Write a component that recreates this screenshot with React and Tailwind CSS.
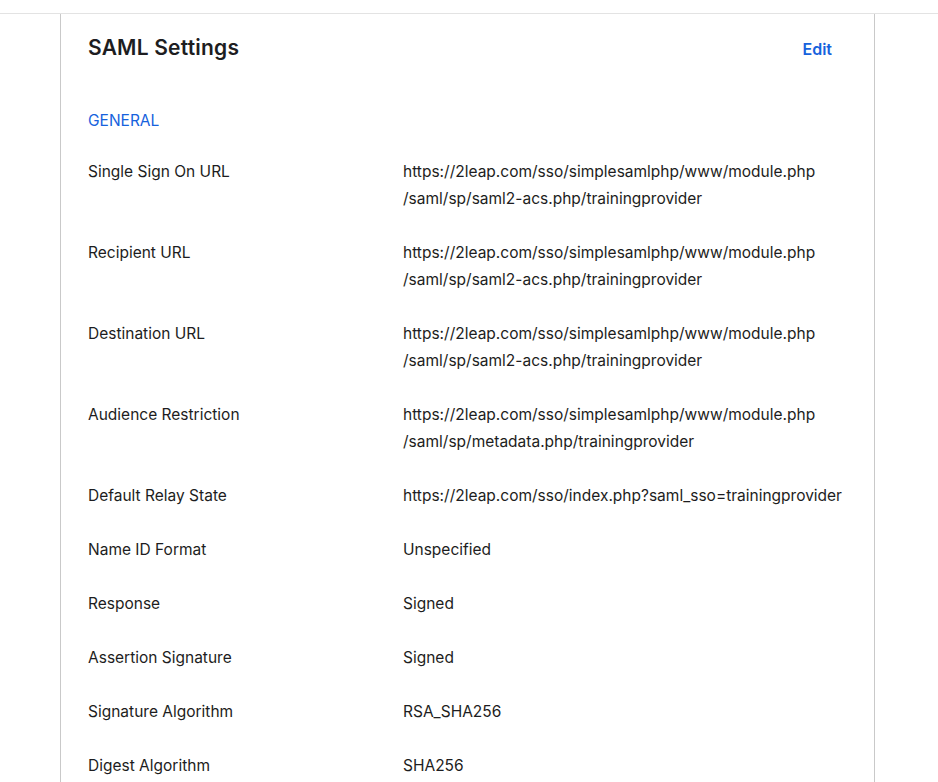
const rows = [
  ['Single Sign On URL', ['https://2leap.com/sso/simplesamlphp/www/module.php', '/saml/sp/saml2-acs.php/trainingprovider']],
  ['Recipient URL', ['https://2leap.com/sso/simplesamlphp/www/module.php', '/saml/sp/saml2-acs.php/trainingprovider']],
  ['Destination URL', ['https://2leap.com/sso/simplesamlphp/www/module.php', '/saml/sp/saml2-acs.php/trainingprovider']],
  ['Audience Restriction', ['https://2leap.com/sso/simplesamlphp/www/module.php', '/saml/sp/metadata.php/trainingprovider']],
  ['Default Relay State', ['https://2leap.com/sso/index.php?saml_sso=trainingprovider']],
  ['Name ID Format', ['Unspecified']],
  ['Response', ['Signed']],
  ['Assertion Signature', ['Signed']],
  ['Signature Algorithm', ['RSA_SHA256']],
  ['Digest Algorithm', ['SHA256']],
]

export default function App() {
  return (
    <div className="h-[782px] overflow-hidden bg-white pt-[13px] text-[#1d1d21]" style={{ fontFamily: 'Inter, "Noto Sans", sans-serif' }}>
      <div className="border-t border-[#e3e3e3]">
        <div className="ml-[60px] w-[815px] min-h-[800px] border-x border-[#c9c9c9] pl-[27px] pr-[42px]">
          <div className="flex items-center justify-between pt-[20px]">
            <h2 className="text-[21px] font-semibold leading-[28px] tracking-[0.2px]">SAML Settings</h2>
            <button className="mt-[1px] text-[16px] font-semibold text-[#1662dd]">Edit</button>
          </div>
          <div className="mt-[49px] text-[15.5px] leading-[20px] text-[#1662dd]">GENERAL</div>
          <div className="mt-[27px] flex flex-col gap-[27px] text-[15.5px] leading-[27px]">
            {rows.map(([label, value]) => (
              <div key={label} className="flex">
                <div className="w-[315px] shrink-0">{label}</div>
                <div className="whitespace-nowrap">
                  {value.map(v => <div key={v}>{v}</div>)}
                </div>
              </div>
            ))}
          </div>
        </div>
      </div>
    </div>
  )
}
